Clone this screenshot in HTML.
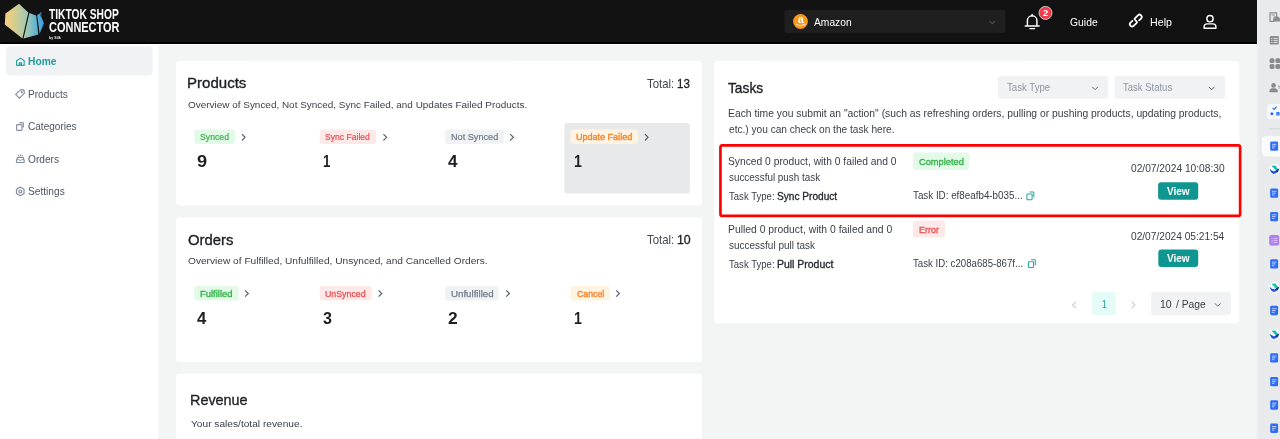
<!DOCTYPE html>
<html>
<head>
<meta charset="utf-8">
<title>TikTok Shop Connector</title>
<style>
*{box-sizing:border-box;margin:0;padding:0}
html,body{width:1280px;height:439px;overflow:hidden;background:#f3f4f4;font-family:"Liberation Sans",sans-serif;color:#1f2329}
.a{position:absolute}
.t{position:absolute;white-space:nowrap;line-height:1;transform-origin:0 0;filter:blur(0.3px)}
.card{position:absolute;background:#fff;border-radius:4px}
.tag{position:absolute;border-radius:3px}
svg{position:absolute;overflow:visible}

</style>
</head>
<body>
<!-- base layout -->
<div class="a" style="left:0;top:0;width:1257px;height:42px;background:#121212"></div>
<div class="a" style="left:0;top:42px;width:1257px;height:2px;background:#030303"></div>
<div class="a" style="left:0;top:44px;width:1257px;height:1px;background:#fff"></div>
<div class="a" style="left:0;top:45px;width:158px;height:394px;background:#fff"></div>
<div class="a" style="left:158px;top:45px;width:1px;height:394px;background:#f8f9f9"></div>
<div class="a" style="left:1257px;top:0;width:23px;height:439px;background:#e9eaec"></div>
<div class="a" style="left:1257px;top:0;width:2px;height:439px;background:#edeef0"></div>

<svg style="left:0;top:0" width="1280" height="439" viewBox="0 0 1280 439">
  <!-- cards -->
  <rect x="176" y="61.2" width="526" height="144.4" rx="4" fill="#fff"/>
  <rect x="176" y="217.5" width="526" height="144.4" rx="4" fill="#fff"/>
  <rect x="176" y="373.8" width="526" height="80" rx="4" fill="#fff"/>
  <rect x="714" y="61.2" width="525.3" height="262.2" rx="4" fill="#fff"/>
  <!-- sidebar active item -->
  <rect x="6" y="46.3" width="146.6" height="29.3" rx="4" fill="#f1f2f4"/>
  <!-- amazon select -->
  <rect x="784.5" y="9.8" width="221" height="23.2" rx="3" fill="#1f1f1f"/>
  <!-- product tags -->
  <rect x="564.4" y="123" width="125.5" height="70.6" rx="3" fill="#e8e9ea"/>
  <rect x="194.2" y="129.5" width="40.7" height="14.6" rx="3" fill="#e4fae9"/>
  <rect x="319.8" y="129.5" width="56.3" height="14.6" rx="3" fill="#fde9e8"/>
  <rect x="445" y="129.5" width="58.7" height="14.6" rx="3" fill="#f1f2f4"/>
  <rect x="570.5" y="129.5" width="67.7" height="14.6" rx="3" fill="#fff3e2"/>
  <!-- order tags -->
  <rect x="194.2" y="286" width="44.5" height="14.4" rx="3" fill="#e4fae9"/>
  <rect x="319.8" y="286" width="52" height="14.4" rx="3" fill="#fde9e8"/>
  <rect x="445" y="286" width="53.9" height="14.4" rx="3" fill="#f1f2f4"/>
  <rect x="570.4" y="286" width="39.5" height="14.4" rx="3" fill="#fff3e2"/>
  <!-- task selects -->
  <rect x="997.9" y="76" width="110.2" height="22.7" rx="3" fill="#f1f2f4"/>
  <rect x="1114.5" y="76" width="110.5" height="22.7" rx="3" fill="#f1f2f4"/>
  <!-- status tags -->
  <rect x="912.9" y="152.4" width="56.4" height="17.6" rx="3" fill="#e4fae9"/>
  <rect x="912.9" y="220.4" width="32.1" height="17.2" rx="3" fill="#fde9e8"/>
  <!-- view buttons -->
  <rect x="1158.1" y="182.2" width="40.1" height="17.6" rx="3" fill="#109690"/>
  <rect x="1158.3" y="249.6" width="39.9" height="17.5" rx="3" fill="#109690"/>
  <!-- pagination -->
  <rect x="1092.2" y="292" width="23.4" height="23.2" rx="3" fill="#e5fbf7"/>
  <rect x="1151.1" y="292" width="79.8" height="23.2" rx="3" fill="#f1f2f4"/>
  <!-- red highlight box -->
  <rect x="718.6" y="143.6" width="523.3" height="74" rx="3" fill="none" stroke="#ffffff" stroke-width="1.2" opacity="0.9"/>
  <rect x="720.45" y="145.45" width="519.7" height="70.5" rx="2" fill="none" stroke="#ff0000" stroke-width="2.7"/>
</svg>

<svg style="left:0;top:0" width="1280" height="439" viewBox="0 0 1280 439">
<defs><linearGradient id="lg" x1="4.8" y1="0" x2="44" y2="0" gradientUnits="userSpaceOnUse"><stop offset="0" stop-color="#fbd07a"/><stop offset="0.36" stop-color="#c4cc9a"/><stop offset="0.6" stop-color="#98c6b8"/><stop offset="0.8" stop-color="#5eb2d0"/><stop offset="1" stop-color="#379de2"/></linearGradient></defs>
<polygon points="19,3.8 5.5,13.5 4.8,24.6 22.4,38.4 28.3,12.6" fill="url(#lg)"/>
<polygon points="29.4,13 36.2,15.6 38.3,34.5 23.6,38.6" fill="url(#lg)"/>
<polygon points="37.2,15.3 40,13.2 41.3,11.7 41.2,16.4 43.9,23.2 39.6,33.7" fill="url(#lg)"/>
<path d="M40.2 13.4 L40.9 16.6" stroke="#121212" stroke-width="0.5"/>
<circle cx="800.5" cy="21.5" r="7.4" fill="#f8981d"/>
<path d="M796.3 24.6 Q800.5 27.2 804.9 24.4" stroke="#fff" stroke-width="0.8" fill="none" stroke-linecap="round"/>
<path d="M804 24.2 L805.3 24.1 L804.9 25.3" stroke="#fff" stroke-width="0.6" fill="none"/>
<polyline points="989.4,20.9 992.3,23.7 995.2,20.9" stroke="#46505f" stroke-width="1.1" fill="none"/>
<path d="M1027.4 25.9 V20.6 A4.75 4.75 0 0 1 1036.9 20.6 V25.9" stroke="#fff" stroke-width="1.45" fill="none"/>
<path d="M1025.2 26 H1039.1" stroke="#fff" stroke-width="1.4" stroke-linecap="round"/>
<path d="M1029.9 28.7 H1034.6" stroke="#fff" stroke-width="1.3" stroke-linecap="round"/>
<path d="M1032.15 14.4 V16" stroke="#fff" stroke-width="1.3" stroke-linecap="round"/>
<circle cx="1045.5" cy="12.9" r="6.5" fill="#f03d49" stroke="#e6e9ec" stroke-width="0.8"/>
<g transform="translate(1135.8,20.6) rotate(-45)" stroke="#fff" stroke-width="1.75" fill="none" stroke-linecap="round" stroke-linejoin="round"><path d="M2.5 2.25 H5.2 A2.25 2.25 0 0 0 5.2 -2.25 H0.9 A0.9 0.9 0 0 0 0 -1.35 V1.35 A0.9 0.9 0 0 1 -0.9 2.25 H-5.2 A2.25 2.25 0 0 1 -5.2 -2.25 H-2.5"/></g>
<circle cx="1210" cy="18.7" r="3.15" stroke="#fff" stroke-width="1.4" fill="none"/>
<path d="M1204.1 28.3 V26.9 A3 3 0 0 1 1207.1 23.9 H1212.9 A3 3 0 0 1 1215.9 26.9 V28.3 Z" stroke="#fff" stroke-width="1.4" fill="none" stroke-linejoin="round"/>
<g stroke="#2aa3a1" stroke-width="1.15" fill="none" stroke-linejoin="round"><path d="M16.6 60.7 L20.4 58.1 L24.2 60.7 V65.3 H16.6 Z"/><path d="M19.3 65.3 V62.7 H21.5 V65.3" fill="#2aa3a1" fill-opacity="0.6"/></g>
<g stroke="#848d9c" stroke-width="1.15" fill="none" stroke-linejoin="round">
<path d="M20.6 89.9 L23.9 89.9 L24.4 93.2 L19.4 98.4 L15.6 94.4 Z"/><circle cx="21.8" cy="92.3" r="0.55" fill="#848d9c"/>
<rect x="16.6" y="124.6" width="5.4" height="5.8" rx="0.8"/><path d="M19.4 122.6 H22.5 A0.8 0.8 0 0 1 23.3 123.4 V127.6"/>
<path d="M17.4 157.4 H23.3 L24.3 161.3 A1 1 0 0 1 23.3 162.5 H17.4 A1 1 0 0 1 16.4 161.3 Z"/><path d="M16.8 159.6 H18.6 Q20.3 161.4 22.1 159.6 H23.9" stroke-width="0.9"/><path d="M18.1 154.7 L18.8 156.2 M20.35 154.2 V156.1 M22.6 154.7 L21.9 156.2" stroke-width="0.9"/>
<polygon points="20.25,187.05 16.48,189.22 16.48,193.58 20.25,195.75 24.02,193.58 24.02,189.22" stroke-linejoin="round" stroke-width="1.2"/>
<circle cx="20.25" cy="191.40" r="1.45"/>
</g>
<polyline points="241.9,134.1 245.1,137.3 241.9,140.5" stroke="#555c68" stroke-width="1.1" fill="none"/>
<polyline points="383.4,134.1 386.6,137.3 383.4,140.5" stroke="#555c68" stroke-width="1.1" fill="none"/>
<polyline points="510.2,134.1 513.4,137.3 510.2,140.5" stroke="#555c68" stroke-width="1.1" fill="none"/>
<polyline points="644.9,134.1 648.1,137.3 644.9,140.5" stroke="#555c68" stroke-width="1.1" fill="none"/>
<polyline points="245.1,290.3 248.3,293.5 245.1,296.7" stroke="#555c68" stroke-width="1.1" fill="none"/>
<polyline points="378.6,290.3 381.8,293.5 378.6,296.7" stroke="#555c68" stroke-width="1.1" fill="none"/>
<polyline points="506.2,290.3 509.4,293.5 506.2,296.7" stroke="#555c68" stroke-width="1.1" fill="none"/>
<polyline points="616.2,290.3 619.4,293.5 616.2,296.7" stroke="#555c68" stroke-width="1.1" fill="none"/>
<polyline points="1092.3,86.9 1095.1,89.7 1097.9,86.9" stroke="#5f6772" stroke-width="1.0" fill="none"/>
<polyline points="1208.8,86.9 1211.6,89.7 1214.4,86.9" stroke="#5f6772" stroke-width="1.0" fill="none"/>
<polyline points="1214.9,303.4 1217.7,306.2 1220.5,303.4" stroke="#5f6772" stroke-width="1.0" fill="none"/>
<g stroke="#27a5a2" stroke-width="1.05" fill="none" stroke-linejoin="round"><rect x="1026.9" y="193.9" width="5.2" height="5.8" rx="0.8"/><path d="M1029.6 191.9 H1033.0 A0.8 0.8 0 0 1 1033.8 192.7 V197.3"/></g>
<g stroke="#27a5a2" stroke-width="1.05" fill="none" stroke-linejoin="round"><rect x="1028.4" y="261.8" width="5.2" height="5.8" rx="0.8"/><path d="M1031.1 259.8 H1034.5 A0.8 0.8 0 0 1 1035.3 260.6 V265.2"/></g>
<polyline points="1075.9,301.7 1072.7,304.9 1075.9,308.1" stroke="#c9ccd1" stroke-width="1.1" fill="none"/>
<polyline points="1131.7,301.7 1134.9,304.9 1131.7,308.1" stroke="#c9ccd1" stroke-width="1.1" fill="none"/>
<path d="M1270 12.8 H1276.6 V17 H1274 V21.4 H1270 Z" fill="none" stroke="#8b8b8d" stroke-width="1.2" stroke-linejoin="round"/>
<path d="M1271.5 15 H1275" stroke="#8b8b8d" stroke-width="0.9"/>
<path d="M1274.3 21.5 A1.9 1.9 0 0 1 1274.9 17.9 A2.6 2.6 0 0 1 1279.8 18.6 L1280 21.5 Z" fill="#8b8b8d"/>
<rect x="1269.8" y="36.1" width="9" height="8.5" rx="1.2" fill="#8b8b8d"/>
<path d="M1271.2 38.4 H1272.4 M1273.6 38.4 H1277.6 M1271.2 40.4 H1272.4 M1273.6 40.4 H1277.6 M1271.2 42.4 H1272.4 M1273.6 42.4 H1277.6" stroke="#e9eaec" stroke-width="0.9"/>
<rect x="1269.6" y="58.2" width="4.9" height="4.9" rx="1.6" fill="#8b8b8d"/>
<rect x="1275.4" y="58.2" width="4.9" height="4.9" rx="1.6" fill="#8b8b8d"/>
<rect x="1269.6" y="64.0" width="4.9" height="4.9" rx="1.6" fill="#8b8b8d"/>
<rect x="1275.4" y="64.0" width="4.9" height="4.9" rx="1.6" fill="#8b8b8d"/>
<circle cx="1273.6" cy="85.4" r="2.3" fill="#8b8b8d"/>
<path d="M1269.4 92.2 V91 A3.2 3.2 0 0 1 1272.6 88.2 H1274.6 A3.2 3.2 0 0 1 1277.8 91 V92.2 Z" fill="#8b8b8d"/>
<path d="M1278 86.3 H1280 M1278.6 88 H1280" stroke="#8b8b8d" stroke-width="0.8"/>
<rect x="1267.4" y="104" width="16" height="15" rx="3" fill="#f7f8fa"/>
<polyline points="1272.7,107.9 1274.1,109.3 1276.6,106.6" stroke="#2f6df6" stroke-width="1.2" fill="none"/>
<circle cx="1271.9" cy="113.8" r="1.5" fill="#2f6df6"/>
<rect x="1276.2" y="112" width="3.4" height="3.6" rx="0.6" fill="#3b82f6"/>
<path d="M1268.8 128.9 H1280" stroke="#d4d5d8" stroke-width="1"/>
<rect x="1261.8" y="136.2" width="24" height="20.4" rx="4.5" fill="#fafbfc"/>
<rect x="1270.2" y="141.4" width="7.9" height="9.4" rx="1.4" fill="#2f6df6"/>
<path d="M1272 144.3 H1276.4 M1272 146.1 H1275.6 M1272 147.9 H1274.4" stroke="#dbe6ff" stroke-width="0.8"/>
<circle cx="1274.6" cy="169.4" r="5.6" fill="#fbfcfd"/>
<path d="M1271.4 165.8 L1275.4 165.6 L1278.6 169.8 L1276.4 171.0 Z" fill="#19c3a6"/>
<path d="M1269.6 168.8 Q1272.4 171.6 1275 171.2 L1279.2 168.6 Q1277.6 173.8 1273.6 174.0 Q1270.4 173.0 1269.6 168.8 Z" fill="#2456e8"/>
<path d="M1275 171.2 L1279.4 168.4 L1277.6 172.6 Z" fill="#17348f"/>
<rect x="1270.2" y="188.4" width="7.9" height="9.4" rx="1.4" fill="#2f6df6"/>
<path d="M1272 191.3 H1276.4 M1272 193.1 H1275.6 M1272 194.9 H1274.4" stroke="#dbe6ff" stroke-width="0.8"/>
<rect x="1270.2" y="211.9" width="7.9" height="9.4" rx="1.4" fill="#2f6df6"/>
<path d="M1272 214.8 H1276.4 M1272 216.6 H1275.6 M1272 218.4 H1274.4" stroke="#dbe6ff" stroke-width="0.8"/>
<rect x="1269.2" y="235" width="10" height="10.6" rx="2.2" fill="#b07cf2"/>
<path d="M1271.6 238.4 H1272.6 M1273.8 238.4 H1277.4 M1271.6 240.4 H1272.6 M1273.8 240.4 H1277.4 M1271.6 242.4 H1272.6 M1273.8 242.4 H1277.4" stroke="#ead9ff" stroke-width="0.8"/>
<rect x="1270.2" y="259.2" width="7.9" height="9.4" rx="1.4" fill="#2f6df6"/>
<path d="M1272 262.1 H1276.4 M1272 263.9 H1275.6 M1272 265.7 H1274.4" stroke="#dbe6ff" stroke-width="0.8"/>
<circle cx="1274.6" cy="287.4" r="5.6" fill="#fbfcfd"/>
<path d="M1271.4 283.8 L1275.4 283.6 L1278.6 287.8 L1276.4 289.0 Z" fill="#19c3a6"/>
<path d="M1269.6 286.8 Q1272.4 289.6 1275 289.2 L1279.2 286.6 Q1277.6 291.8 1273.6 292.0 Q1270.4 291.0 1269.6 286.8 Z" fill="#2456e8"/>
<path d="M1275 289.2 L1279.4 286.4 L1277.6 290.6 Z" fill="#17348f"/>
<rect x="1270.2" y="305.8" width="7.9" height="9.4" rx="1.4" fill="#2f6df6"/>
<path d="M1272 308.7 H1276.4 M1272 310.5 H1275.6 M1272 312.3 H1274.4" stroke="#dbe6ff" stroke-width="0.8"/>
<circle cx="1274.6" cy="334.3" r="5.6" fill="#fbfcfd"/>
<path d="M1271.4 330.7 L1275.4 330.5 L1278.6 334.7 L1276.4 335.9 Z" fill="#19c3a6"/>
<path d="M1269.6 333.7 Q1272.4 336.5 1275 336.1 L1279.2 333.5 Q1277.6 338.7 1273.6 338.9 Q1270.4 337.9 1269.6 333.7 Z" fill="#2456e8"/>
<path d="M1275 336.1 L1279.4 333.3 L1277.6 337.5 Z" fill="#17348f"/>
<rect x="1270.2" y="353.2" width="7.9" height="9.4" rx="1.4" fill="#2f6df6"/>
<path d="M1272 356.1 H1276.4 M1272 357.9 H1275.6 M1272 359.7 H1274.4" stroke="#dbe6ff" stroke-width="0.8"/>
<rect x="1270.2" y="376.9" width="7.9" height="9.4" rx="1.4" fill="#2f6df6"/>
<path d="M1272 379.8 H1276.4 M1272 381.6 H1275.6 M1272 383.4 H1274.4" stroke="#dbe6ff" stroke-width="0.8"/>
<rect x="1270.2" y="400.3" width="7.9" height="9.4" rx="1.4" fill="#2f6df6"/>
<path d="M1272 403.2 H1276.4 M1272 405.0 H1275.6 M1272 406.8 H1274.4" stroke="#dbe6ff" stroke-width="0.8"/>
<rect x="1270.2" y="423.6" width="7.9" height="9.4" rx="1.4" fill="#2f6df6"/>
<path d="M1272 426.5 H1276.4 M1272 428.3 H1275.6 M1272 430.1 H1274.4" stroke="#dbe6ff" stroke-width="0.8"/>
</svg>
<!-- text -->
<span class="t" style="left:48.90px;top:7px;font-size:14.4px;color:#ffffff;transform:scaleX(0.7109);font-weight:bold;">TIKTOK SHOP</span>
<span class="t" style="left:48.56px;top:20px;font-size:14.4px;color:#ffffff;transform:scaleX(0.7624);font-weight:bold;">CONNECTOR</span>
<span class="t" style="left:48.78px;top:36px;font-size:4.2px;color:#e8e8e8;transform:scaleX(0.8644);font-weight:bold;">by Silk</span>
<span class="t" style="left:797.53px;top:14px;font-size:11.4px;color:#ffffff;transform:scaleX(0.8943);font-weight:bold;">a</span>
<span class="t" style="left:814.00px;top:17px;font-size:11px;color:#ffffff;transform:scaleX(0.9323);">Amazon</span>
<span class="t" style="left:1069.78px;top:17px;font-size:11px;color:#ffffff;transform:scaleX(0.9423);">Guide</span>
<span class="t" style="left:1149.73px;top:17px;font-size:11px;color:#ffffff;transform:scaleX(0.9716);">Help</span>
<span class="t" style="left:1042.92px;top:9px;font-size:8.4px;color:#ffffff;transform:scaleX(1.1220);font-weight:bold;">2</span>
<span class="t" style="left:28.24px;top:57px;font-size:10.1px;color:#1f9c9a;transform:scaleX(1.0150);font-weight:bold;">Home</span>
<span class="t" style="left:28.11px;top:90px;font-size:10.2px;color:#4d5562;transform:scaleX(0.9923);">Products</span>
<span class="t" style="left:27.91px;top:122px;font-size:10.2px;color:#4d5562;transform:scaleX(0.9860);">Categories</span>
<span class="t" style="left:27.95px;top:155px;font-size:10.2px;color:#4d5562;transform:scaleX(0.9943);">Orders</span>
<span class="t" style="left:28.05px;top:187px;font-size:10.2px;color:#4d5562;transform:scaleX(0.9985);">Settings</span>
<span class="t" style="left:187.43px;top:75px;font-size:15px;color:#1c1f23;transform:scaleX(1.0025);-webkit-text-stroke:0.35px #1c1f23;">Products</span>
<span class="t" style="left:187.94px;top:100px;font-size:9.7px;color:#3b4048;transform:scaleX(1.0262);">Overview of Synced, Not Synced, Sync Failed, and Updates Failed Products.</span>
<span class="t" style="left:647.37px;top:78px;font-size:12.4px;color:#444a52;transform:scaleX(0.9190);">Total:</span>
<span class="t" style="left:676.76px;top:78px;font-size:12.4px;color:#1c1f23;transform:scaleX(0.9358);-webkit-text-stroke:0.3px #1c1f23;">13</span>
<span class="t" style="left:200.12px;top:133px;font-size:9.2px;color:#35b34a;transform:scaleX(0.9455);-webkit-text-stroke:0.2px #35b34a;">Synced</span>
<span class="t" style="left:325.43px;top:133px;font-size:9.2px;color:#ea4a50;transform:scaleX(0.9342);-webkit-text-stroke:0.2px #ea4a50;">Sync Failed</span>
<span class="t" style="left:450.95px;top:133px;font-size:9.2px;color:#717a88;transform:scaleX(0.9948);-webkit-text-stroke:0.2px #717a88;">Not Synced</span>
<span class="t" style="left:576.31px;top:133px;font-size:9.2px;color:#f5832c;transform:scaleX(0.9819);-webkit-text-stroke:0.35px #f5832c;">Update Failed</span>
<span class="t" style="left:196.83px;top:154px;font-size:15.8px;color:#1c1f23;transform:scaleX(1.1519);font-weight:bold;">9</span>
<span class="t" style="left:323.37px;top:154px;font-size:15.8px;color:#1c1f23;transform:scaleX(0.8371);font-weight:bold;">1</span>
<span class="t" style="left:448.20px;top:154px;font-size:15.8px;color:#1c1f23;transform:scaleX(1.0802);font-weight:bold;">4</span>
<span class="t" style="left:573.92px;top:154px;font-size:15.8px;color:#1c1f23;transform:scaleX(0.8911);font-weight:bold;">1</span>
<span class="t" style="left:187.70px;top:232px;font-size:15px;color:#1c1f23;transform:scaleX(0.9895);-webkit-text-stroke:0.35px #1c1f23;">Orders</span>
<span class="t" style="left:187.93px;top:256px;font-size:9.7px;color:#3b4048;transform:scaleX(1.0478);">Overview of Fulfilled, Unfulfilled, Unsynced, and Cancelled Orders.</span>
<span class="t" style="left:647.37px;top:234px;font-size:12.4px;color:#444a52;transform:scaleX(0.9190);">Total:</span>
<span class="t" style="left:676.70px;top:234px;font-size:12.4px;color:#1c1f23;transform:scaleX(0.9963);-webkit-text-stroke:0.3px #1c1f23;">10</span>
<span class="t" style="left:200.03px;top:290px;font-size:9.2px;color:#35b34a;transform:scaleX(1.0268);-webkit-text-stroke:0.35px #35b34a;">Fulfilled</span>
<span class="t" style="left:325.43px;top:290px;font-size:9.2px;color:#ea4a50;transform:scaleX(0.9568);-webkit-text-stroke:0.25px #ea4a50;">UnSynced</span>
<span class="t" style="left:450.96px;top:290px;font-size:9.2px;color:#717a88;transform:scaleX(1.0554);-webkit-text-stroke:0.25px #717a88;">Unfulfilled</span>
<span class="t" style="left:576.57px;top:290px;font-size:9.2px;color:#f5832c;transform:scaleX(0.9531);-webkit-text-stroke:0.35px #f5832c;">Cancel</span>
<span class="t" style="left:197.10px;top:311px;font-size:15.8px;color:#1c1f23;transform:scaleX(1.0577);font-weight:bold;">4</span>
<span class="t" style="left:322.65px;top:311px;font-size:15.8px;color:#1c1f23;transform:scaleX(1.0188);font-weight:bold;">3</span>
<span class="t" style="left:447.96px;top:311px;font-size:15.8px;color:#1c1f23;transform:scaleX(1.1013);font-weight:bold;">2</span>
<span class="t" style="left:573.92px;top:311px;font-size:15.8px;color:#1c1f23;transform:scaleX(0.8911);font-weight:bold;">1</span>
<span class="t" style="left:190.48px;top:392px;font-size:15px;color:#1c1f23;transform:scaleX(0.9594);-webkit-text-stroke:0.35px #1c1f23;">Revenue</span>
<span class="t" style="left:191.09px;top:419px;font-size:9.7px;color:#3b4048;transform:scaleX(1.0487);">Your sales/total revenue.</span>
<span class="t" style="left:728.39px;top:80px;font-size:15px;color:#1c1f23;transform:scaleX(0.9166);-webkit-text-stroke:0.35px #1c1f23;">Tasks</span>
<span class="t" style="left:1006.72px;top:82px;font-size:10.6px;color:#9096a0;transform:scaleX(0.9092);">Task Type</span>
<span class="t" style="left:1123.32px;top:82px;font-size:10.6px;color:#9096a0;transform:scaleX(0.8978);">Task Status</span>
<span class="t" style="left:728.06px;top:109px;font-size:10.4px;color:#3b4048;transform:scaleX(0.9934);">Each time you submit an "action" (such as refreshing orders, pulling or pushing products, updating products,</span>
<span class="t" style="left:728.51px;top:125px;font-size:10.4px;color:#3b4048;transform:scaleX(0.9744);">etc.) you can check on the task here.</span>
<span class="t" style="left:728.46px;top:157px;font-size:10.4px;color:#3b4048;transform:scaleX(0.9887);">Synced 0 product, with 0 failed and 0</span>
<span class="t" style="left:728.66px;top:173px;font-size:10.4px;color:#3b4048;transform:scaleX(0.9503);">successful push task</span>
<span class="t" style="left:728.72px;top:192px;font-size:10.4px;color:#3b4048;transform:scaleX(0.9203);">Task Type:</span>
<span class="t" style="left:776.96px;top:192px;font-size:10.4px;color:#262a30;transform:scaleX(0.9729);-webkit-text-stroke:0.32px #262a30;">Sync Product</span>
<span class="t" style="left:918.96px;top:157px;font-size:9.4px;color:#35b34a;transform:scaleX(0.9881);-webkit-text-stroke:0.35px #35b34a;">Completed</span>
<span class="t" style="left:913.21px;top:191px;font-size:10.2px;color:#3b4048;transform:scaleX(0.9629);">Task ID: ef8eafb4-b035...</span>
<span class="t" style="left:1131.35px;top:164px;font-size:10.2px;color:#3b4048;transform:scaleX(1.0015);">02/07/2024 10:08:30</span>
<span class="t" style="left:1166.95px;top:187px;font-size:10.2px;color:#ffffff;transform:scaleX(0.9837);font-weight:bold;">View</span>
<span class="t" style="left:728.05px;top:225px;font-size:10.4px;color:#3b4048;transform:scaleX(0.9979);">Pulled 0 product, with 0 failed and 0</span>
<span class="t" style="left:728.66px;top:241px;font-size:10.4px;color:#3b4048;transform:scaleX(0.9609);">successful pull task</span>
<span class="t" style="left:728.72px;top:260px;font-size:10.4px;color:#3b4048;transform:scaleX(0.9203);">Task Type:</span>
<span class="t" style="left:776.55px;top:260px;font-size:10.4px;color:#262a30;transform:scaleX(1.0057);-webkit-text-stroke:0.32px #262a30;">Pull Product</span>
<span class="t" style="left:918.68px;top:225px;font-size:9.4px;color:#ea4a50;transform:scaleX(0.9596);-webkit-text-stroke:0.3px #ea4a50;">Error</span>
<span class="t" style="left:913.21px;top:259px;font-size:10.2px;color:#3b4048;transform:scaleX(0.9483);">Task ID: c208a685-867f...</span>
<span class="t" style="left:1131.35px;top:232px;font-size:10.2px;color:#3b4048;transform:scaleX(0.9971);">02/07/2024 05:21:54</span>
<span class="t" style="left:1166.95px;top:254px;font-size:10.2px;color:#ffffff;transform:scaleX(0.9837);font-weight:bold;">View</span>
<span class="t" style="left:1101.58px;top:299px;font-size:11px;color:#179b97;transform:scaleX(0.7708);">1</span>
<span class="t" style="left:1159.84px;top:299px;font-size:11px;color:#3a3f46;transform:scaleX(0.9530);">10</span>
<span class="t" style="left:1176.40px;top:299px;font-size:11px;color:#3a3f46;transform:scaleX(0.9383);">/ Page</span>
</body>
</html>
